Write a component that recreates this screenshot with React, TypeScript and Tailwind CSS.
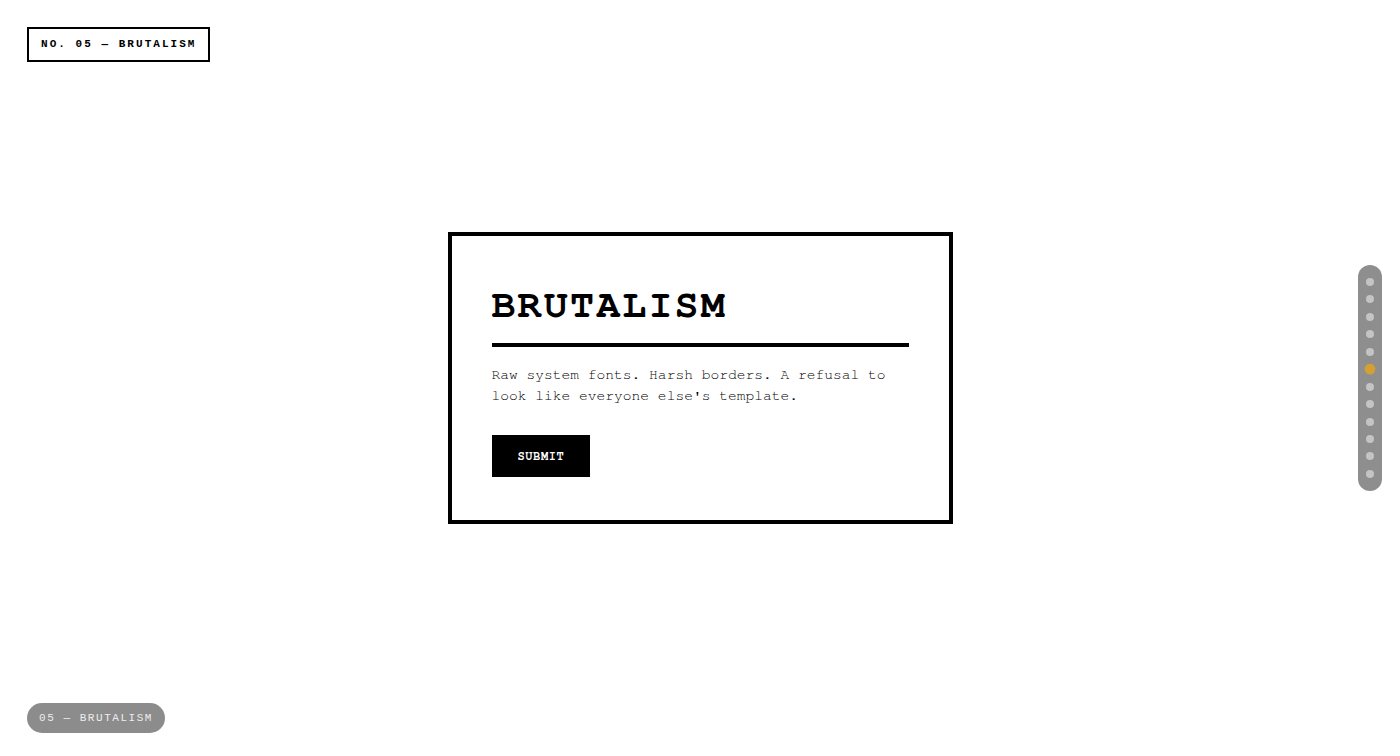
import { useState } from 'react';

const sections = Array.from({ length: 12 }, (_, i) => i);

function App() {
  const [active, setActive] = useState(5);

  return (
    <div className="relative w-screen h-screen overflow-hidden bg-white text-black">
      {/* Top-left label */}
      <div className="absolute top-[27px] left-[27px] border-2 border-black px-3 py-2 font-mono text-[11px] leading-[15px] font-bold tracking-[0.185em]">
        NO. 05 — BRUTALISM
      </div>

      {/* Main card */}
      <main className="w-full h-full flex items-center justify-center">
        <div className="w-[505px] border-4 border-black bg-white px-10 pt-10 pb-[43px] font-['Nimbus_Mono_PS','Nimbus_Mono_L',FreeMono,'Courier_10_Pitch','Courier_New',Courier,monospace]">
          <h1 className="mt-[9px] text-[40px] leading-none font-bold tracking-[0.054em] pb-[18px] border-b-4 border-black">
            BRUTALISM
          </h1>
          <p className="mt-[17px] text-[14.6px] leading-[21px] text-black">
            Raw system fonts. Harsh borders. A refusal to look like everyone else's template.
          </p>
          <button className="mt-[29px] bg-black text-white px-[26px] py-3 text-[12px] leading-[18px] font-bold tracking-[0.05em]">
            SUBMIT
          </button>
        </div>
      </main>

      {/* Right section nav */}
      <nav className="absolute right-[18px] top-1/2 -translate-y-1/2 w-6 rounded-full bg-[#8e8e8e] py-[13px] flex flex-col items-center gap-[9.45px]">
        {sections.map((i) => (
          <button
            key={i}
            onClick={() => setActive(i)}
            className={
              i === active
                ? 'w-2 h-2 rounded-full bg-[#d4a033] scale-[1.35]'
                : 'w-2 h-2 rounded-full bg-[#c4c4c4]'
            }
            aria-label={`Section ${i + 1}`}
          />
        ))}
      </nav>

      {/* Bottom-left pill */}
      <div className="absolute bottom-[23px] left-[27px] rounded-full bg-[#8c8c8c] px-3 py-2 font-mono text-[11px] leading-[14px] tracking-[0.14em] text-[#ececec]">
        05 — BRUTALISM
      </div>
    </div>
  );
}

export default App;
